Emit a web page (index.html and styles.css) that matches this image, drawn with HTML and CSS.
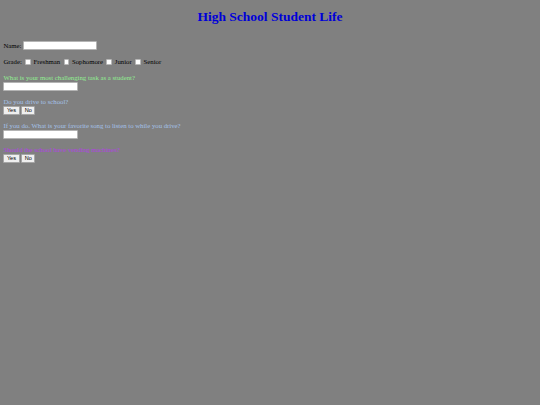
FILE: index.html
```html
<!DOCTYPE html>
<html>
<head>
<meta charset="utf-8">
<title>High School Student Life</title>
<link rel="stylesheet" href="styles.css">
</head>
<body>
<h1 class="title">High School Student Life</h1>
<form class="survey">
  <div class="row name-row">
    <label class="label" for="name">Name:</label>
    <input class="field" id="name" type="text">
  </div>
  <div class="row grade-row">
    <span class="label">Grade:</span>
    <input class="check" type="checkbox" id="g1"><label for="g1">Freshman</label>
    <input class="check" type="checkbox" id="g2"><label for="g2">Sophomore</label>
    <input class="check" type="checkbox" id="g3"><label for="g3">Junior</label>
    <input class="check" type="checkbox" id="g4"><label for="g4">Senior</label>
  </div>
  <div class="q q-first q-green">
    <div class="q-text">What is your most challenging task as a student?</div>
    <div class="ctrl"><input class="field" type="text"></div>
  </div>
  <div class="q q-blue">
    <div class="q-text">Do you drive to school?</div>
    <div class="ctrl">
      <button class="btn" type="button">Yes</button>
      <button class="btn" type="button">No</button>
    </div>
  </div>
  <div class="q q-blue">
    <div class="q-text">If you do. What is your favorite song to listen to while you drive?</div>
    <div class="ctrl"><input class="field" type="text"></div>
  </div>
  <div class="q q-purple">
    <div class="q-text">Should the school have vending machines?</div>
    <div class="ctrl">
      <button class="btn" type="button">Yes</button>
      <button class="btn" type="button">No</button>
    </div>
  </div>
</form>
</body>
</html>
```

FILE: styles.css
```css
html, body {
  margin: 0;
  padding: 0;
}
body {
  background: #808080;
  color: #000;
  font-family: "Liberation Serif", "Times New Roman", serif;
  font-size: 6.75px;
  line-height: 8px;
  padding: 0 3.4px;
}
.title {
  margin: 8.8px 0 0;
  text-align: center;
  color: #0000d8;
  font-size: 13.5px;
  line-height: 16px;
  font-weight: bold;
}
.survey {
  margin: 0;
}
.row {
  display: flex;
  align-items: center;
  white-space: nowrap;
}
.name-row {
  margin-top: 16.5px;
  height: 8.8px;
}
.name-row .label {
  margin-right: 1.7px;
}
.grade-row {
  margin-top: 8.9px;
  height: 6px;
}
.check {
  -webkit-appearance: none;
  appearance: none;
  box-sizing: border-box;
  width: 5.4px;
  height: 5.4px;
  margin: 0 3px 0 3.4px;
  padding: 0;
  background: #fff;
  border: 1px solid #b8b8b8;
  border-radius: 1px;
}
.field {
  box-sizing: border-box;
  width: 74.4px;
  height: 8.8px;
  margin: 0;
  padding: 0;
  background: #fff;
  border: 1px solid #b4b4b4;
  border-radius: 1px;
  font-size: 5.6px;
}
.q {
  margin-top: 5.6px;
}
.q-first {
  margin-top: 7.8px;
}
.q-text {
  padding-top: 0.9px;
  line-height: 7.5px;
  white-space: nowrap;
}
.ctrl {
  display: flex;
  align-items: center;
  gap: 1.7px;
  height: 10px;
}
.btn {
  box-sizing: border-box;
  height: 8.8px;
  margin: 0;
  padding: 0 2.5px;
  background: #efefef;
  border: 1px solid #a6a6a6;
  border-radius: 1px;
  color: #000;
  font-family: "Liberation Sans", Arial, sans-serif;
  font-size: 5.6px;
  line-height: 6px;
}
.q-green {
  color: #90ee90;
}
.q-blue {
  color: #a4c0e8;
}
.q-purple {
  color: #b040e0;
}
```
